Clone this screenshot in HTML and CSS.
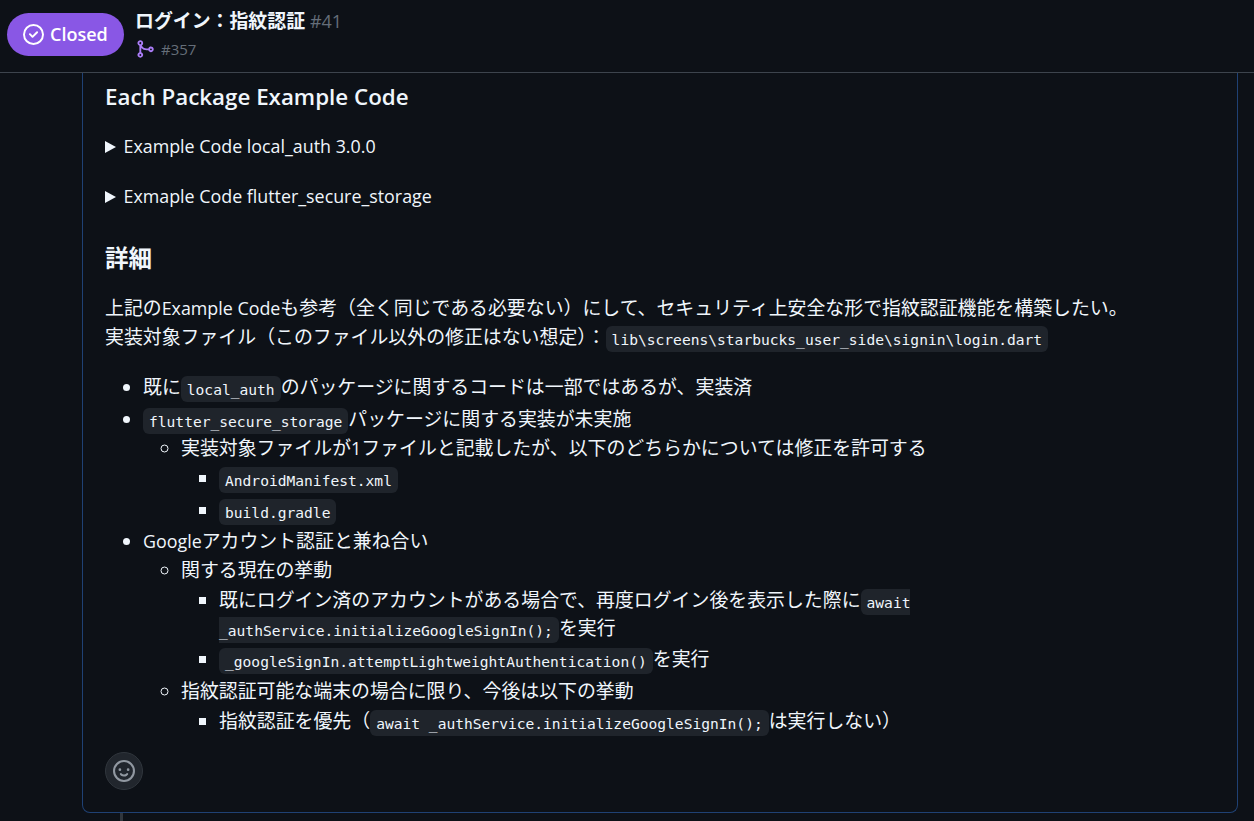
FILE: index.html

```html
<!DOCTYPE html>
<html lang="ja">
<head>
  <meta charset="UTF-8">
  <meta name="viewport" content="width=device-width, initial-scale=1.0">
  <title>ログイン：指紋認証 #41</title>
  <link rel="stylesheet" href="styles.css">
</head>
<body>
  <header class="issue-header">
    <span class="state-badge">
      <svg class="state-icon" viewBox="0 0 16 16" width="21" height="21" fill="currentColor"><path d="M11.28 6.78a.75.75 0 0 0-1.06-1.06L7.25 8.69 5.78 7.22a.75.75 0 0 0-1.06 1.06l2 2a.75.75 0 0 0 1.06 0l3.5-3.5Z"/><path d="M16 8A8 8 0 1 1 0 8a8 8 0 0 1 16 0Zm-1.5 0a6.5 6.5 0 1 0-13 0 6.5 6.5 0 0 0 13 0Z"/></svg>
      Closed
    </span>
    <div class="issue-title">
      <div class="title-line"><strong>ログイン：指紋認証</strong> <span class="issue-number">#41</span></div>
      <div class="pr-line">
        <svg class="merge-icon" viewBox="0 0 16 16" width="20" height="20" fill="currentColor"><path d="M5.45 5.154A4.25 4.25 0 0 0 9.25 7.5h1.378a2.251 2.251 0 1 1 0 1.5H9.25A5.734 5.734 0 0 1 5 7.123v3.505a2.25 2.25 0 1 1-1.5 0V5.372a2.25 2.25 0 1 1 1.95-.218ZM4.25 13.5a.75.75 0 1 0 0-1.5.75.75 0 0 0 0 1.5Zm8.5-4.5a.75.75 0 1 0 0-1.5.75.75 0 0 0 0 1.5ZM5 3.25a.75.75 0 1 0 0 .005V3.25Z"/></svg>
        <span class="pr-number">#357</span>
      </div>
    </div>
  </header>

  <main class="timeline">
    <article class="comment">
      <h3 class="first">Each Package Example Code</h3>
      <p class="summary"><span class="arrow"></span>Example Code local_auth 3.0.0</p>
      <p class="summary"><span class="arrow"></span>Exmaple Code flutter_secure_storage</p>
      <h3 class="details">詳細</h3>
      <p class="intro">上記の<span class="en">Example Code</span>も参考（全く同じである必要ない）にして、セキュリティ上安全な形で指紋認証機能を構築したい。<br>実装対象ファイル（このファイル以外の修正はない想定）：<code>lib\screens\starbucks_user_side\signin\login.dart</code></p>
      <ul class="list">
        <li>既に<code>local_auth</code>のパッケージに関するコードは一部ではあるが、実装済</li>
        <li><code>flutter_secure_storage</code>パッケージに関する実装が未実施
          <ul>
            <li>実装対象ファイルが<span class="en">1</span>ファイルと記載したが、以下のどちらかについては修正を許可する
              <ul>
                <li><code>AndroidManifest.xml</code></li>
                <li><code>build.gradle</code></li>
              </ul>
            </li>
          </ul>
        </li>
        <li><span class="en">Google</span>アカウント認証と兼ね合い
          <ul>
            <li>関する現在の挙動
              <ul>
                <li class="tight">既にログイン済のアカウントがある場合で、再度ログイン後を表示した際に<code>await _authService.initializeGoogleSignIn();</code>を実行</li>
                <li><code>_googleSignIn.attemptLightweightAuthentication()</code>を実行</li>
              </ul>
            </li>
            <li>指紋認証可能な端末の場合に限り、今後は以下の挙動
              <ul>
                <li>指紋認証を優先（<code>await _authService.initializeGoogleSignIn();</code>は実行しない）</li>
              </ul>
            </li>
          </ul>
        </li>
      </ul>
      <button class="reaction" type="button">
        <svg viewBox="0 0 16 16" width="22" height="22" fill="currentColor"><path d="M8 0a8 8 0 1 1 0 16A8 8 0 0 1 8 0ZM1.5 8a6.5 6.5 0 1 0 13 0 6.5 6.5 0 0 0-13 0Zm3.82 1.636a.75.75 0 0 1 1.038.175l.007.009c.103.118.22.222.35.31.264.178.683.37 1.285.37.602 0 1.02-.192 1.285-.371.13-.088.247-.192.35-.31l.007-.008a.75.75 0 0 1 1.222.87l-.022-.015c.02.013.021.015.021.015v.001l-.001.002-.002.003-.005.007-.014.019a2.066 2.066 0 0 1-.184.213c-.16.166-.338.316-.53.445-.63.418-1.37.638-2.127.629-.946 0-1.652-.308-2.126-.63a3.331 3.331 0 0 1-.715-.657l-.014-.02-.005-.006-.002-.003v-.002h-.001l.613-.432-.614.43a.75.75 0 0 1 .183-1.044ZM12 7a1 1 0 1 1-2 0 1 1 0 0 1 2 0ZM5 8a1 1 0 1 1 0-2 1 1 0 0 1 0 2Z"/></svg>
      </button>
    </article>
    <div class="timeline-line"></div>
  </main>
</body>
</html>
```

FILE: styles.css

```css
* {
  box-sizing: border-box;
}

html, body {
  height: 100%;
}

body {
  margin: 0;
  overflow: hidden;
  background-color: #0d1117;
  color: #f0f6fc;
  font-family: 'Open Sans', 'Noto Sans CJK JP', sans-serif;
  font-size: 18.9px;
  line-height: 29px;
}

.en {
  font-size: 17.85px;
}

.issue-header {
  display: flex;
  align-items: flex-start;
  height: 73px;
  padding: 13px 7px 0;
  border-bottom: 1px solid #3d444d;
}

.state-badge {
  display: flex;
  align-items: center;
  gap: 6px;
  width: 117px;
  height: 43px;
  padding-left: 16px;
  margin-right: 11px;
  border-radius: 22px;
  background-color: #8957e5;
  color: #fff;
  font-size: 18px;
  font-weight: 600;
}

.issue-title {
  margin-top: -5px;
}

.title-line {
  height: 27px;
  line-height: 27px;
}

.title-line strong {
  font-weight: 700;
}

.issue-number {
  font-size: 18px;
}

.issue-number, .pr-number {
  color: #656e79;
  font-weight: 400;
}

.pr-line {
  display: flex;
  align-items: center;
  gap: 6px;
  height: 28px;
  font-size: 15px;
}

.merge-icon {
  color: #ab7df8;
}

.timeline {
  padding-left: 82px;
  padding-right: 16px;
}

.comment {
  height: 740px;
  padding: 9px 22px 0;
  border: 1px solid #1f4174;
  border-top: none;
  border-radius: 0 0 8px 8px;
}

.timeline-line {
  width: 3px;
  height: 20px;
  margin-left: 38px;
  background-color: #30363d;
}

h3 {
  margin: 0 0 12px;
  font-size: 22.35px;
  line-height: 30px;
  font-weight: 600;
}

h3.first {
  margin-bottom: 20px;
}

h3.details {
  margin-top: 32px;
  margin-bottom: 21px;
  font-size: 23.5px;
}

.summary {
  margin: 0 0 21px;
  display: flex;
  align-items: center;
  font-size: 17.85px;
}

.arrow {
  width: 0;
  height: 0;
  margin-right: 7.5px;
  border-left: 11px solid #f0f6fc;
  border-top: 6px solid transparent;
  border-bottom: 6px solid transparent;
}

.intro {
  margin: 0 0 21px;
}

code {
  padding: 4.5px 6px;
  border-radius: 6px;
  background-color: #1f242b;
  font-family: 'DejaVu Sans Mono', monospace;
  font-size: 14.6px;
  line-height: 1;
}

ul {
  margin: 0;
  padding-left: 38px;
}

ul ul {
  list-style-type: circle;
}

ul ul ul {
  margin-top: 1px;
  list-style-type: square;
}

.list > li + li {
  margin-top: 3px;
}

.list > li:last-child {
  margin-top: 2px;
}

li li + li {
  margin-top: 3px;
}

.tight {
  line-height: 28px;
}

.reaction {
  display: flex;
  align-items: center;
  justify-content: center;
  width: 38px;
  height: 38px;
  margin-top: 16px;
  padding: 0;
  border: 1px solid #30363d;
  border-radius: 50%;
  background-color: #21262d;
  color: #9198a1;
}
```
